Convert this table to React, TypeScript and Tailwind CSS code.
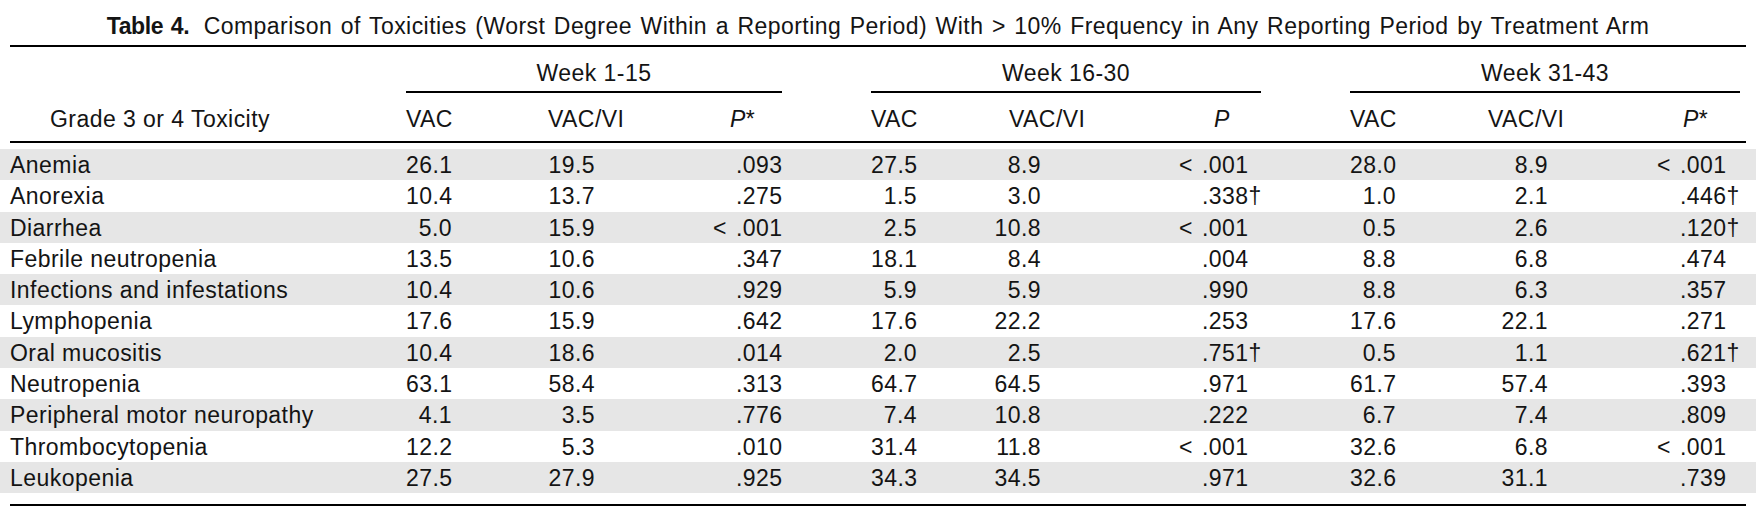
import { Fragment } from "react";

const rows: [string, string[]][] = [
  ["Anemia", ["26.1", "19.5", ".093", "27.5", "8.9", "<.001", "28.0", "8.9", "<.001"]],
  ["Anorexia", ["10.4", "13.7", ".275", "1.5", "3.0", ".338†", "1.0", "2.1", ".446†"]],
  ["Diarrhea", ["5.0", "15.9", "<.001", "2.5", "10.8", "<.001", "0.5", "2.6", ".120†"]],
  ["Febrile neutropenia", ["13.5", "10.6", ".347", "18.1", "8.4", ".004", "8.8", "6.8", ".474"]],
  ["Infections and infestations", ["10.4", "10.6", ".929", "5.9", "5.9", ".990", "8.8", "6.3", ".357"]],
  ["Lymphopenia", ["17.6", "15.9", ".642", "17.6", "22.2", ".253", "17.6", "22.1", ".271"]],
  ["Oral mucositis", ["10.4", "18.6", ".014", "2.0", "2.5", ".751†", "0.5", "1.1", ".621†"]],
  ["Neutropenia", ["63.1", "58.4", ".313", "64.7", "64.5", ".971", "61.7", "57.4", ".393"]],
  ["Peripheral motor neuropathy", ["4.1", "3.5", ".776", "7.4", "10.8", ".222", "6.7", "7.4", ".809"]],
  ["Thrombocytopenia", ["12.2", "5.3", ".010", "31.4", "11.8", "<.001", "32.6", "6.8", "<.001"]],
  ["Leukopenia", ["27.5", "27.9", ".925", "34.3", "34.5", ".971", "32.6", "31.1", ".739"]],
];

const grid =
  "grid grid-cols-[396px_46px_143px_187px_89px_46px_124px_220px_89px_46px_152px_192px] pl-[10px]";

// per group: where the decimal point column starts inside the P cell, and header offsets
const groups = [
  { label: "Week 1-15", pBox: "w-[141px]", pHead: "pl-[135px]", viHead: "pl-[96px]", star: true },
  { label: "Week 16-30", pBox: "w-[161px]", pHead: "pl-[173px]", viHead: "pl-[92px]", star: false },
  { label: "Week 31-43", pBox: "w-[132px]", pHead: "pl-[135px]", viHead: "pl-[92px]", star: true },
];

function PCell({ value, box }: { value: string; box: string }) {
  const lt = value.startsWith("<");
  const num = value.replace("<", "");
  return (
    <div className="flex">
      <span className={`${box} shrink-0 pr-[9px] text-right`}>{lt ? "<" : ""}</span>
      <span className="whitespace-nowrap">{num}</span>
    </div>
  );
}

export default function App() {
  return (
    <div className="h-[514px] w-[1756px] overflow-hidden bg-white font-['Liberation_Sans',Arial,sans-serif] text-[23px] tracking-[0.45px] text-[#141414]">
      {/* caption */}
      <div className="whitespace-nowrap px-[10px] pt-[14px] text-center leading-[25px] [word-spacing:1.7px]">
        <span className="font-bold tracking-[-0.4px]">Table 4.</span>
        <span className="ml-[6px]">
          {" "}
          Comparison of Toxicities (Worst Degree Within a Reporting Period) With &gt; 10% Frequency in Any Reporting
          Period by Treatment Arm
        </span>
      </div>
      <div className="mx-[10px] mt-[6px] h-[2px] bg-black" />

      {/* period headers */}
      <div className={`${grid} pt-[14px]`}>
        <div />
        {groups.map((g, i) => (
          <Fragment key={g.label}>
            <div className="col-span-3 flex flex-col">
              <div className="text-center leading-[25px]">{g.label}</div>
              <div className="mt-[5px] h-[2px] bg-black" />
            </div>
            {i < 2 && <div />}
          </Fragment>
        ))}
      </div>

      {/* column headers */}
      <div className={`${grid} pt-[14px] leading-[25px]`}>
        <div className="pl-[40px]">Grade 3 or 4 Toxicity</div>
        {groups.map((g, i) => (
          <Fragment key={g.label}>
            <div className="whitespace-nowrap">VAC</div>
            <div className={`${g.viHead} whitespace-nowrap`}>VAC/VI</div>
            <div className={g.pHead}>
              <i>P</i>
              {g.star ? "*" : ""}
            </div>
            {i < 2 && <div />}
          </Fragment>
        ))}
      </div>
      <div className="mx-[10px] mt-[9px] h-[2px] bg-black" />

      {/* body */}
      <div className="mt-[6px]">
        {rows.map(([name, v], r) => (
          <div
            key={name}
            className={`${grid} h-[31.3px] pt-[2px] leading-[29.3px] ${r % 2 === 0 ? "bg-[#e6e6e6]" : "bg-white"}`}
          >
            <div className="whitespace-nowrap">{name}</div>
            {groups.map((g, i) => (
              <Fragment key={g.label}>
                <div className="text-right">{v[i * 3]}</div>
                <div className="text-right">{v[i * 3 + 1]}</div>
                <PCell value={v[i * 3 + 2]} box={g.pBox} />
                {i < 2 && <div />}
              </Fragment>
            ))}
          </div>
        ))}
      </div>
      <div className="mx-[10px] mt-[11px] h-[2px] bg-black" />
    </div>
  );
}
